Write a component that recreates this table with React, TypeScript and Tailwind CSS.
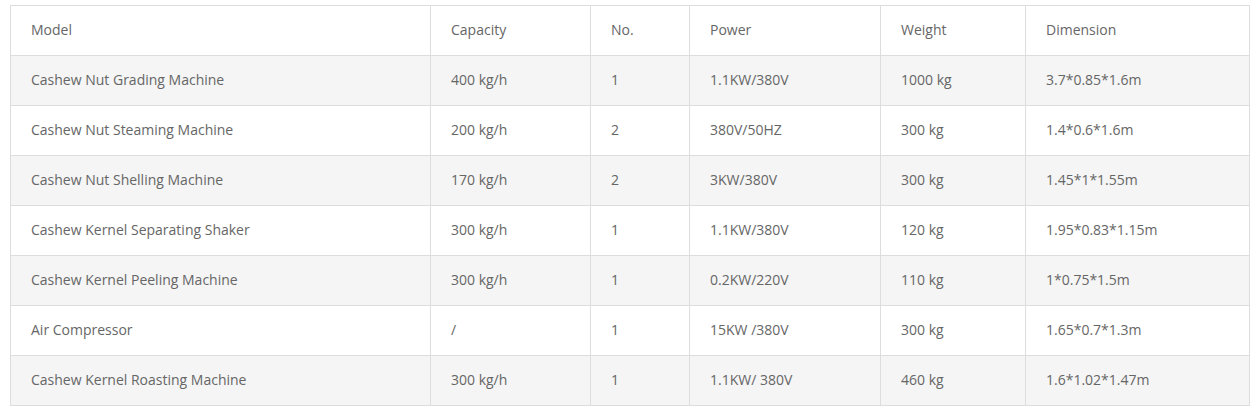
import React from "react";

const rows = [
  ["Cashew Nut Grading Machine", "400 kg/h", "1", "1.1KW/380V", "1000 kg", "3.7*0.85*1.6m"],
  ["Cashew Nut Steaming Machine", "200 kg/h", "2", "380V/50HZ", "300 kg", "1.4*0.6*1.6m"],
  ["Cashew Nut Shelling Machine", "170 kg/h", "2", "3KW/380V", "300 kg", "1.45*1*1.55m"],
  ["Cashew Kernel Separating Shaker", "300 kg/h", "1", "1.1KW/380V", "120 kg", "1.95*0.83*1.15m"],
  ["Cashew Kernel Peeling Machine", "300 kg/h", "1", "0.2KW/220V", "110 kg", "1*0.75*1.5m"],
  ["Air Compressor", "/", "1", "15KW /380V", "300 kg", "1.65*0.7*1.3m"],
  ["Cashew Kernel Roasting Machine", "300 kg/h", "1", "1.1KW/ 380V", "460 kg", "1.6*1.02*1.47m"],
];

const head = ["Model", "Capacity", "No.", "Power", "Weight", "Dimension"];

const App = () => (
  <div className="px-[10px] pt-[5px] bg-white font-['Open_Sans',sans-serif] text-[14px] text-[#666]">
    <table className="w-[1240px] table-fixed border-collapse border border-[#ddd]">
      <colgroup>
        <col className="w-[420px]" />
        <col className="w-[160px]" />
        <col className="w-[99px]" />
        <col className="w-[191px]" />
        <col className="w-[145px]" />
        <col />
      </colgroup>
      <thead>
        <tr className="h-[50px]">
          {head.map((h) => (
            <th key={h} className="border border-[#ddd] px-5 pb-[2px] text-left font-normal">
              {h}
            </th>
          ))}
        </tr>
      </thead>
      <tbody>
        {rows.map((r, i) => (
          <tr key={i} className={`h-[50px] ${i % 2 === 0 ? "bg-[#f5f5f5]" : "bg-white"}`}>
            {r.map((c, j) => (
              <td key={j} className="border border-[#ddd] px-5 pb-[2px]">
                {c}
              </td>
            ))}
          </tr>
        ))}
      </tbody>
    </table>
  </div>
);

export default App;
